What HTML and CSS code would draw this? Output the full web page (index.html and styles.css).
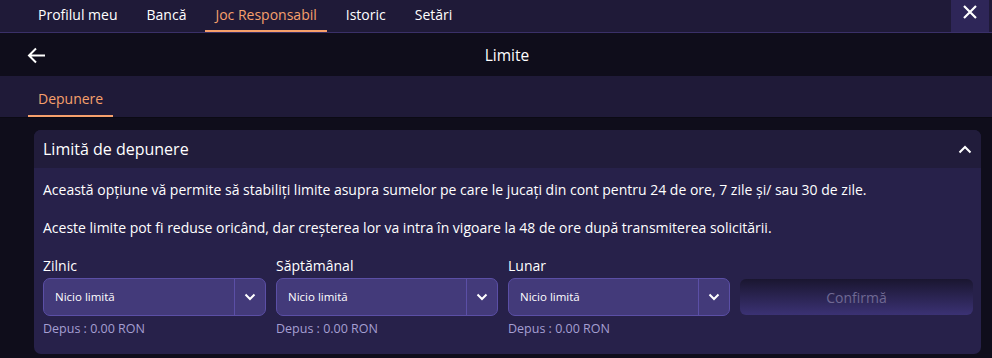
FILE: index.html
```html
<!DOCTYPE html>
<html>
<head>
    <title>Joc Responsabil - Limite</title>
    <link rel="stylesheet" href="styles.css">
</head>
<body>
    <div class="top-nav">
        <div class="nav-tabs">
            <a class="nav-tab">Profilul meu</a>
            <a class="nav-tab">Bancă</a>
            <a class="nav-tab active">Joc Responsabil</a>
            <a class="nav-tab">Istoric</a>
            <a class="nav-tab">Setări</a>
        </div>
        <button class="close-btn" aria-label="Închide">
            <svg width="16" height="16" viewBox="0 0 16 16"><path d="M2 2L14 14M14 2L2 14" stroke="#fff" stroke-width="2.2" fill="none"/></svg>
        </button>
    </div>

    <div class="title-bar">
        <button class="back-btn" aria-label="Înapoi">
            <svg width="19" height="17" viewBox="0 0 19 17"><path d="M18 8.5H2M9 1.5L2 8.5L9 15.5" stroke="#fff" stroke-width="2" fill="none"/></svg>
        </button>
        <div class="page-title">Limite</div>
    </div>

    <div class="sub-tabs">
        <a class="sub-tab active">Depunere</a>
    </div>

    <div class="content">
        <div class="limit-card">
            <div class="card-header">
                <span>Limită de depunere</span>
                <svg width="14" height="9" viewBox="0 0 14 9"><path d="M1.5 7.5L7 2L12.5 7.5" stroke="#fff" stroke-width="2" fill="none"/></svg>
            </div>
            <div class="card-body">
                <p>Această opțiune vă permite să stabiliți limite asupra sumelor pe care le jucați din cont pentru 24 de ore, 7 zile și/ sau 30 de zile.</p>
                <p>Aceste limite pot fi reduse oricând, dar creșterea lor va intra în vigoare la 48 de ore după transmiterea solicitării.</p>

                <div class="limit-row">
                    <div class="limit-field">
                        <label>Zilnic</label>
                        <div class="select-box">
                            <span class="select-value">Nicio limită</span>
                            <span class="select-arrow"><svg width="12" height="8" viewBox="0 0 12 8"><path d="M1.5 1.5L6 6L10.5 1.5" stroke="#fff" stroke-width="2" fill="none"/></svg></span>
                        </div>
                        <div class="deposited">Depus : 0.00 RON</div>
                    </div>
                    <div class="limit-field">
                        <label>Săptămânal</label>
                        <div class="select-box">
                            <span class="select-value">Nicio limită</span>
                            <span class="select-arrow"><svg width="12" height="8" viewBox="0 0 12 8"><path d="M1.5 1.5L6 6L10.5 1.5" stroke="#fff" stroke-width="2" fill="none"/></svg></span>
                        </div>
                        <div class="deposited">Depus : 0.00 RON</div>
                    </div>
                    <div class="limit-field">
                        <label>Lunar</label>
                        <div class="select-box">
                            <span class="select-value">Nicio limită</span>
                            <span class="select-arrow"><svg width="12" height="8" viewBox="0 0 12 8"><path d="M1.5 1.5L6 6L10.5 1.5" stroke="#fff" stroke-width="2" fill="none"/></svg></span>
                        </div>
                        <div class="deposited">Depus : 0.00 RON</div>
                    </div>
                    <div class="limit-field">
                        <button class="confirm-btn" disabled>Confirmă</button>
                    </div>
                </div>
            </div>
        </div>
    </div>
</body>
</html>
```

FILE: styles.css
```css
body {
    font-family: 'Open Sans', Arial, sans-serif;
    background-color: #0f0d1b;
    color: #fff;
    margin: 0;
    padding: 0;
}

.top-nav {
    display: flex;
    justify-content: space-between;
    height: 32px;
    background-color: #1f1a38;
    border-bottom: 1px solid #3a3068;
}

.nav-tabs {
    display: flex;
    padding-left: 28px;
    gap: 9px;
}

.nav-tab {
    display: block;
    padding: 0 10px;
    font-size: 14px;
    line-height: 30px;
    color: #fff;
    border-bottom: 2px solid transparent;
}

.nav-tab.active {
    color: #f6a06c;
    border-bottom-color: #f6a06c;
}

.close-btn {
    width: 38px;
    height: 32px;
    margin-right: 3px;
    border: none;
    padding: 4px 0 0;
    background-color: #2e2658;
    display: flex;
    justify-content: center;
    align-items: flex-start;
}

.title-bar {
    display: flex;
    align-items: center;
    height: 43px;
    padding: 0 27px;
    background-color: #0f0d1b;
}

.back-btn {
    border: none;
    background: none;
    padding: 0;
    display: flex;
    margin-top: 1px;
}

.page-title {
    flex: 1;
    text-align: center;
    font-size: 15.5px;
    margin-right: 19px;
    margin-left: 22px;
}

.sub-tabs {
    display: flex;
    height: 41px;
    padding-left: 28px;
    background-color: #1f1a38;
    border-bottom: 1px solid #0b0a14;
}

.sub-tab {
    display: block;
    padding: 0 10px;
    font-size: 14px;
    line-height: 46px;
    color: #f6a06c;
    border-bottom: 2px solid #f6a06c;
    height: 39px;
    overflow: hidden;
}

.content {
    padding: 12px 11px 0 34px;
}

.limit-card {
    border-radius: 7px;
    overflow: hidden;
    background-color: #27214a;
}

.card-header {
    display: flex;
    justify-content: space-between;
    align-items: center;
    height: 38px;
    padding: 0 9px;
    background-color: #211c3b;
    font-size: 16px;
}

.card-body {
    padding: 2px 8px 17px 9px;
    font-size: 14px;
}

.card-body p {
    margin: 11px 0 20px;
    line-height: 18px;
}

.limit-row {
    display: grid;
    grid-template-columns: 223px 222px 222px 1fr;
    gap: 10px;
    margin-top: 19px;
}

.limit-field label {
    display: block;
    font-size: 14px;
    line-height: 18px;
    margin-bottom: 3px;
}

.select-box {
    display: flex;
    height: 36px;
    border: 1px solid #5b4fa6;
    border-radius: 7px;
    background-color: #433a7a;
    overflow: hidden;
}

.select-value {
    flex: 1;
    padding-left: 11px;
    font-size: 11.5px;
    line-height: 36px;
}

.select-arrow {
    width: 30px;
    border-left: 1px solid #5b4fa6;
    display: flex;
    justify-content: center;
    align-items: center;
}

.deposited {
    margin-top: 4px;
    font-size: 12.5px;
    color: #a59fd2;
}

.confirm-btn {
    width: 100%;
    height: 36px;
    margin-top: 22px;
    border: none;
    border-radius: 6px;
    background-image: linear-gradient(to bottom, #1a1630, #3b3274);
    color: #6f6993;
    font-family: inherit;
    font-size: 14px;
}
```
